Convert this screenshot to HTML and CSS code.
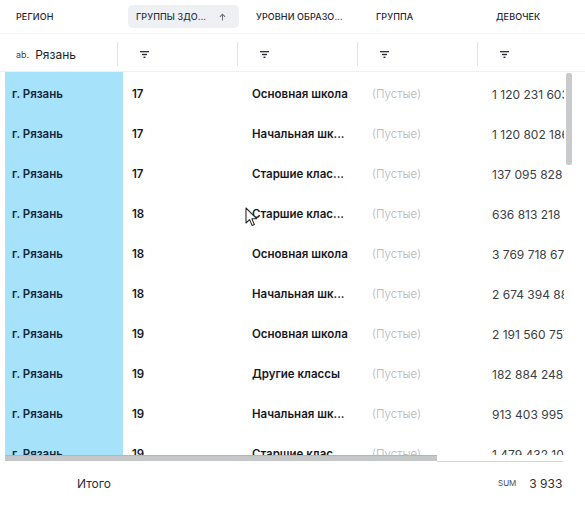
FILE: index.html
```html
<!DOCTYPE html>
<html lang="ru">
<head>
<meta charset="utf-8">
<link rel="stylesheet" href="styles.css">
</head>
<body>
<div class="grid">
  <div class="row head">
    <div class="hc c1"><span class="htxt">Регион</span></div>
    <div class="hc c2"><div class="pill"><span class="htxt">Группы здоровья</span><svg class="sort" width="7" height="8" viewBox="0 0 7 8"><path d="M3.5 0.5 L6.5 3.6 L5.7 4.3 L4 2.6 V7.5 H3 V2.6 L1.3 4.3 L0.5 3.6 Z" fill="#6b6f78"/></svg></div></div>
    <div class="hc c3"><span class="htxt">Уровни образования</span></div>
    <div class="hc c4"><span class="htxt">Группа</span></div>
    <div class="hc c5"><span class="htxt">Девочек</span></div>
  </div>
  <div class="row filters">
    <div class="fc f1"><span class="ab">ab.</span><span class="fval">Рязань</span></div>
    <div class="fc"><svg class="ficon" width="9" height="7" viewBox="0 0 9 7"><rect x="0" y="0" width="9" height="1.3" fill="#2b2f38"/><rect x="2" y="2.8" width="5" height="1.4" fill="#2b2f38"/><rect x="3.5" y="5.6" width="2" height="1.4" fill="#2b2f38"/></svg></div>
    <div class="fc"><svg class="ficon" width="9" height="7" viewBox="0 0 9 7"><rect x="0" y="0" width="9" height="1.3" fill="#2b2f38"/><rect x="2" y="2.8" width="5" height="1.4" fill="#2b2f38"/><rect x="3.5" y="5.6" width="2" height="1.4" fill="#2b2f38"/></svg></div>
    <div class="fc"><svg class="ficon" width="9" height="7" viewBox="0 0 9 7"><rect x="0" y="0" width="9" height="1.3" fill="#2b2f38"/><rect x="2" y="2.8" width="5" height="1.4" fill="#2b2f38"/><rect x="3.5" y="5.6" width="2" height="1.4" fill="#2b2f38"/></svg></div>
    <div class="fc"><svg class="ficon" width="9" height="7" viewBox="0 0 9 7"><rect x="0" y="0" width="9" height="1.3" fill="#2b2f38"/><rect x="2" y="2.8" width="5" height="1.4" fill="#2b2f38"/><rect x="3.5" y="5.6" width="2" height="1.4" fill="#2b2f38"/></svg></div>
  </div>
  <div class="body">
    <div class="row drow"><div class="dc c1">г. Рязань</div><div class="dc c2">17</div><div class="dc c3">Основная школа</div><div class="dc c4">(Пустые)</div><div class="dc c5">1 120 231 603</div></div>
    <div class="row drow"><div class="dc c1">г. Рязань</div><div class="dc c2">17</div><div class="dc c3" title="Начальная школа">Начальная шк...</div><div class="dc c4">(Пустые)</div><div class="dc c5">1 120 802 186</div></div>
    <div class="row drow"><div class="dc c1">г. Рязань</div><div class="dc c2">17</div><div class="dc c3" title="Старшие классы">Старшие клас...</div><div class="dc c4">(Пустые)</div><div class="dc c5">137 095 828</div></div>
    <div class="row drow"><div class="dc c1">г. Рязань</div><div class="dc c2">18</div><div class="dc c3" title="Старшие классы">Старшие клас...</div><div class="dc c4">(Пустые)</div><div class="dc c5">636 813 218</div></div>
    <div class="row drow"><div class="dc c1">г. Рязань</div><div class="dc c2">18</div><div class="dc c3">Основная школа</div><div class="dc c4">(Пустые)</div><div class="dc c5">3 769 718 674</div></div>
    <div class="row drow"><div class="dc c1">г. Рязань</div><div class="dc c2">18</div><div class="dc c3" title="Начальная школа">Начальная шк...</div><div class="dc c4">(Пустые)</div><div class="dc c5">2 674 394 886</div></div>
    <div class="row drow"><div class="dc c1">г. Рязань</div><div class="dc c2">19</div><div class="dc c3">Основная школа</div><div class="dc c4">(Пустые)</div><div class="dc c5">2 191 560 757</div></div>
    <div class="row drow"><div class="dc c1">г. Рязань</div><div class="dc c2">19</div><div class="dc c3">Другие классы</div><div class="dc c4">(Пустые)</div><div class="dc c5">182 884 248</div></div>
    <div class="row drow"><div class="dc c1">г. Рязань</div><div class="dc c2">19</div><div class="dc c3" title="Начальная школа">Начальная шк...</div><div class="dc c4">(Пустые)</div><div class="dc c5">913 403 995</div></div>
    <div class="row drow"><div class="dc c1">г. Рязань</div><div class="dc c2">19</div><div class="dc c3" title="Старшие классы">Старшие клас...</div><div class="dc c4">(Пустые)</div><div class="dc c5">1 479 432 101</div></div>
  </div>
  <div class="hscroll"><div class="hthumb"></div><div class="htrack"></div></div>
  <div class="row foot">
    <div class="tc c1 total">Итого</div>
    <div class="tc c2"></div>
    <div class="tc c3"></div>
    <div class="tc c4"></div>
    <div class="tc c5"><span class="sum">SUM</span><span class="sumval">3 933</span></div>
  </div>
  <div class="vscroll"></div>
  <svg class="cursor" width="13" height="20" viewBox="0 0 13 20"><path d="M1 1 V16 L4.6 12.6 L7.2 18.6 L9.4 17.6 L6.9 11.8 H11.8 Z" fill="#ffffff" stroke="#2a2a2a" stroke-width="1.1" stroke-linejoin="round"/></svg>
</div>
</body>
</html>
```
FILE: styles.css
```css
* { box-sizing: border-box; }
html, body { margin: 0; padding: 0; background: #ffffff; }
body { font-family: Inter, "Noto Sans", "Liberation Sans", sans-serif; color: #1d2230; }

.grid { position: relative; width: 585px; height: 505px; overflow: hidden; background: #fff; }

.row { display: flex; padding-left: 5px; width: max-content; }
.c1 { width: 118px; }
.c2, .c3, .c4, .c5 { width: 120px; }

/* header */
.head { height: 34px; align-items: center; border-bottom: 1px solid #f2f3f5; }
.hc { height: 34px; display: flex; align-items: center; padding-left: 11px; padding-right: 12px; overflow: hidden; }
.hc.c2 { padding-left: 5px; padding-right: 0; }
.hc.c3, .hc.c4, .hc.c5 { padding-left: 13px; }
.htxt { font-size: 9px; font-weight: 500; text-transform: uppercase; color: #1e2536; white-space: nowrap; overflow: hidden; text-overflow: ellipsis; letter-spacing: 0.1px; }
.pill { display: flex; align-items: center; width: 111px; height: 23px; background: #eef0f4; border-radius: 5px; padding: 0 13px 0 8px; }
.pill .htxt { flex: 1; min-width: 0; color: #2a3142; }
.sort { margin-left: 10px; flex: none; }
.hc.c3 .htxt { max-width: 92px; }

/* filters */
.filters { height: 38px; align-items: center; padding-top: 3px; border-bottom: 1px solid #f0f1f3; }
.fc { width: 120px; height: 24px; display: flex; align-items: center; padding-left: 22px; border-left: 1px solid #e3e4e7; }
.fc.f1 { width: 112px; border-left: none; padding-left: 11px; }
.ab { font-size: 9px; color: #3a3f4a; margin-right: 6px; }
.fval { font-size: 12px; color: #1a1d25; }
.ficon { display: block; }

/* body */
.body { height: 383px; width: 564px; overflow: hidden; }
.drow { height: 40px; }
.dc { height: 40px; padding: 4px 11px 0 9px; display: flex; align-items: center; font-size: 11.5px; white-space: nowrap; overflow: hidden; }
.dc.c1 { background: #a6e2fa; padding-left: 7px; font-weight: 600; color: #16243a; }
.dc.c2, .dc.c3 { font-weight: 600; color: #17191f; }
.dc.c3 { display: block; line-height: 36px; text-overflow: ellipsis; }
.dc.c4 { color: #b3b5ba; font-weight: 300; }
.dc.c5 { color: #3b3e45; font-weight: 400; font-size: 12px; }

/* horizontal scrollbar */
.hscroll { height: 7px; display: flex; align-items: flex-start; padding-left: 5px; }
.hthumb { width: 432px; height: 6px; background: #c6c7c9; border-top: 1px solid #b5b6b8; }
.htrack { width: 126px; height: 7px; border-bottom: 1px solid #d4d5d8; }

/* footer */
.foot { height: 43px; align-items: center; }
.tc { display: flex; align-items: center; height: 43px; font-size: 12px; }
.total { padding-left: 72px; color: #2c2f36; }
.tc.c5 { padding-left: 15px; }
.sum { font-size: 8px; color: #4a4e58; margin-right: 13px; position: relative; top: -1px; }
.sumval { font-size: 12px; color: #2b2e35; }

/* overlays */
.vscroll { position: absolute; left: 566px; top: 73px; width: 6px; height: 92px; background: #c9cacc; border-radius: 2px; }
.cursor { position: absolute; left: 245px; top: 207px; }
```
